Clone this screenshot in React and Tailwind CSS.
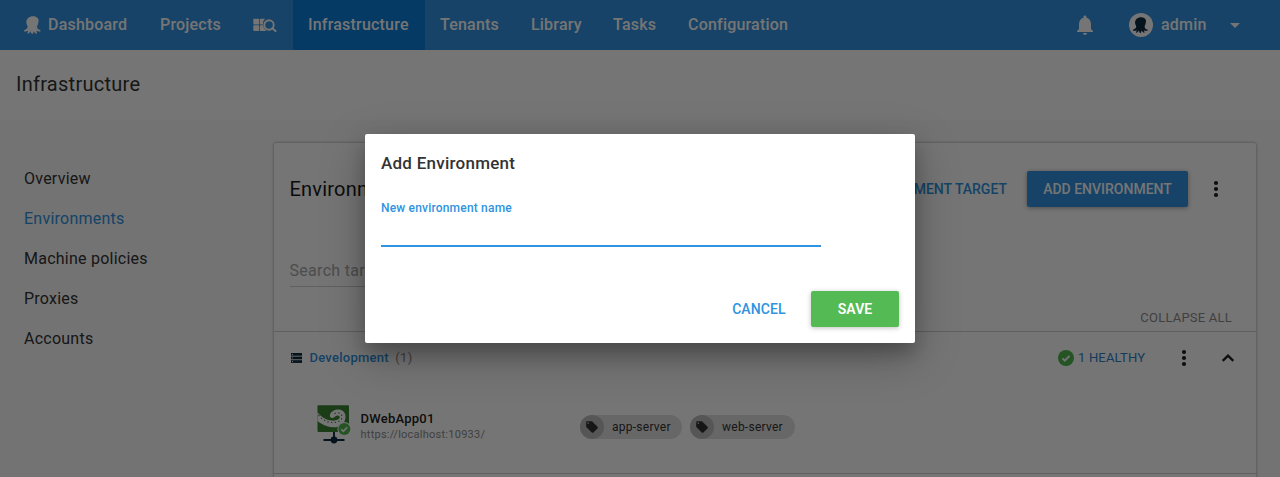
import React from "react";

function Octopus({ className }) {
  return (
    <svg viewBox="0 0 18 18" className={className} fill="currentColor">
      <path d="M9 .2C5.200.2 2.300 2.800 2.300 6.200c0 1.500.6 2.500 1.100 3.600.4 1.100.2 2.200-.7 2.900-.8.700-1.600 1-2.500 1.600-.5.400-.3 1 .3 1.100 1.200.2 2.600 0 3.700-.6-.1.800-.5 1.500-.8 2.200-.2.600.2.900.7.700 1.100-.5 1.900-1.400 2.500-2.400.2.900.4 1.600.9 2.300.3.500 1.100.5 1.400 0 .4-.7.600-1.400.8-2.300.6 1 1.400 1.900 2.500 2.400.6.200 1-.1.800-.7-.3-.8-.6-1.400-.8-2.200 1.100.7 2.600.9 3.900.7.700-.1.800-.7.300-1.100-.9-.6-1.900-.9-2.600-1.600-.8-.8-.9-1.900-.5-3 .4-1.100 1-2.100 1-3.600C15.700 2.800 12.800.2 9 .2z" />
    </svg>
  );
}

function ProjectSearch() {
  return (
    <svg viewBox="0 0 24 14" className="h-[14px] w-[24px]" fill="currentColor">
      <rect x="0.300" y="0.800" width="5.900" height="5.700" rx="0.800" />
      <rect x="0.300" y="7.300" width="5.900" height="5.700" rx="0.800" />
      <path d="M7.600.8h4.600a6.200 6.200 0 0 0-2.200 5.700H6.900V1.600q0-.8.7-.8z" />
      <path d="M6.900 7.300h3.100a6.400 6.400 0 0 0 3.200 5.100l-.4.600H7.600q-.7 0-.7-.8z" />
      <circle cx="16" cy="7" r="4.700" fill="none" stroke="currentColor" strokeWidth="1.900" />
      <path d="M19.300 10.200l3.200 2.900" stroke="currentColor" strokeWidth="2" strokeLinecap="round" />
    </svg>
  );
}

function MoreVert() {
  return (
    <svg viewBox="0 0 24 24" className="h-6 w-6 shrink-0 text-[#1f1f1f]" fill="currentColor">
      <circle cx="12" cy="6" r="2.100" />
      <circle cx="12" cy="12" r="2.100" />
      <circle cx="12" cy="18" r="2.100" />
    </svg>
  );
}

function CheckCircle({ className }) {
  return (
    <svg viewBox="0 0 16 16" className={className}>
      <circle cx="8" cy="8" r="8" fill="#50b84f" />
      <path d="M4.500 8.300l2.300 2.300 4.700-4.700" fill="none" stroke="#fff" strokeWidth="1.900" />
    </svg>
  );
}

function EnvironmentIcon() {
  return (
    <svg viewBox="0 0 11 10" className="h-[10px] w-[11px]">
      <g fill="#0d2a3f">
        <rect width="11" height="2.700" />
        <rect y="3.600" width="11" height="2.700" />
        <rect y="7.200" width="11" height="2.700" />
      </g>
      <g fill="#fff">
        <rect x="1" y="0.900" width="1" height="1" />
        <rect x="1" y="4.500" width="1" height="1" />
        <rect x="1" y="8.100" width="1" height="1" />
      </g>
    </svg>
  );
}

function TentacleIcon() {
  return (
    <svg viewBox="0 0 34 40" className="h-[40px] w-[34px] shrink-0">
      <path d="M17 26v9M6.500 35h21" stroke="#0d2a3f" strokeWidth="1.900" fill="none" />
      <circle cx="17" cy="35" r="3.400" fill="#0d2a3f" />
      <rect x="0.500" y="0.300" width="31.500" height="26.700" rx="1" fill="#3a8536" />
      <path
        d="M.5 7C3.500 11.500 8.500 15 15 15.600c4 .3 7.300-.6 7.700-3 .3-1.900-1.700-2.500-3.500-1.700-1.800.7-2.600 2.300-4.300 2.100-1.900-.3-2.600-2.300-1.600-4.200 1.500-3 5.300-4.700 8.900-4.200 4 .6 6.500 3.600 6.300 7.600-.1 2.300-.9 3.900-1.800 5.400-3.300.8-5.200 2.700-6.200 4.300-3.500.6-7.500.3-11-.9C5.900 19.800 3 18 .5 16z"
        fill="#fff"
      />
      <path d="M1.500 10.200c3.500 4.500 8.500 6.900 13.500 7.300 5.500.4 9.600-1.600 10-5.200.3-2.600-1.600-4.600-4.800-4.400-1.500.1-2.700.6-3.700 1.400" fill="none" stroke="#3a8536" strokeWidth="1.200" strokeDasharray="1.300 2.400" />
      <circle cx="27.300" cy="24" r="6.900" fill="#fff" />
      <circle cx="27.300" cy="24" r="6" fill="#50b84f" />
      <path d="M24.200 24.200l2.100 2.100 4-4.100" fill="none" stroke="#fff" strokeWidth="1.600" />
    </svg>
  );
}

function Chip({ label, className }) {
  return (
    <div className={"flex h-6 items-center rounded-full bg-[#e0e0e0] " + className}>
      <div className="flex h-6 w-6 items-center justify-center rounded-full bg-[#bcbcbc] text-[#303030]">
        <svg viewBox="0 0 24 24" className="h-[14px] w-[14px]" fill="currentColor">
          <path d="M21.410 11.580l-9-9C12.050 2.220 11.550 2 11 2H4c-1.100 0-2 .9-2 2v7c0 .550.220 1.050.590 1.420l9 9c.360.360.860.580 1.410.580s1.050-.220 1.410-.590l7-7c.370-.360.590-.860.590-1.410s-.230-1.060-.590-1.420zM5.500 7C4.670 7 4 6.330 4 5.500S4.670 4 5.500 4 7 4.670 7 5.500 6.330 7 5.500 7z" />
        </svg>
      </div>
      <span className="ml-2 text-[12px] tracking-[0.250px] text-[#333]">{label}</span>
    </div>
  );
}

function NavBar() {
  return (
    <header className="flex h-[50px] items-center bg-[#3192e0] text-[16px] font-medium tracking-[0.200px] text-white">
      <div className="ml-6 flex w-[104px] items-center">
        <Octopus className="mr-[6px] h-[18px] w-[18px] shrink-0" />
        Dashboard
      </div>
      <div className="ml-8 w-[60px]">Projects</div>
      <div className="ml-[33px] w-6">
        <ProjectSearch />
      </div>
      <div className="ml-4 flex h-[50px] w-[132px] items-center bg-[#0a7ed8] pl-[15px]">Infrastructure</div>
      <div className="ml-[15px] w-[91px]">Tenants</div>
      <div className="w-[82px]">Library</div>
      <div className="w-[75px]">Tasks</div>
      <div className="w-[100px]">Configuration</div>
      <svg viewBox="0 0 16 20" className="ml-[289px] h-[20px] w-[16px]" fill="currentColor">
        <path d="M8 20c1.100 0 2-.9 2-2H6c0 1.100.9 2 2 2zm6-6V9c0-3.070-1.640-5.640-4.500-6.320V2C9.500 1.170 8.830.5 8 .5S6.500 1.170 6.500 2v.68C3.630 3.360 2 5.920 2 9v5l-2 2v1h16v-1l-2-2z" />
      </svg>
      <div className="ml-9 flex h-6 w-6 items-center justify-center rounded-full bg-white text-[#0d2a3f]">
        <Octopus className="h-4 w-4" />
      </div>
      <div className="ml-2 w-[45px]">admin</div>
      <svg viewBox="0 0 10 5" className="ml-6 h-[5px] w-[10px]" fill="currentColor">
        <path d="M0 0h10L5 5z" />
      </svg>
    </header>
  );
}

function EnvironmentsCard() {
  return (
    <section className="ml-[274px] mt-[23px] h-[400px] w-[982px] rounded-[2px] bg-white shadow-[0_0_3px_rgba(0,0,0,0.400)]">
      <div className="flex h-[92px] items-center pl-[15.500px] pr-7">
        <h2 className="text-[20px] tracking-[0.200px] text-[#1a1a1a]">Environments</h2>
        <span className="ml-auto text-[14px] font-medium text-[#2f93e0]">ADD DEPLOYMENT TARGET</span>
        <button className="ml-5 h-9 w-[161px] rounded-[2px] bg-[#3192e0] text-[14px] font-medium text-white shadow-[0_1px_5px_rgba(0,0,0,0.350)]">
          ADD ENVIRONMENT
        </button>
        <div className="ml-4">
          <MoreVert />
        </div>
      </div>
      <div className="flex h-[96px] flex-col">
        <div className="ml-4 mt-[22px] h-[30px] w-[440px] border-b border-[#d0d0d0] pt-[1px] text-[16px] leading-[26px] tracking-[0.300px] text-[#a8a8a8]">
          <span className="-ml-[0.500px]">Search targets...</span>
        </div>
        <div className="ml-auto mr-6 mt-[21px] h-5 text-[13px] leading-[20px] tracking-[0.220px] text-[#8c8c8c]">COLLAPSE ALL</div>
      </div>
      <div className="flex h-[143px] flex-col border-y border-[#cfcfcf]">
        <div className="flex h-[52px] items-center pl-[17px] pr-4">
          <EnvironmentIcon />
          <span className="ml-[7.500px] text-[13px] font-medium tracking-[0.250px] text-[#2f93e0]">Development</span>
          <span className="ml-[6.500px] text-[13px] tracking-[0.300px] text-[#8c8c8c]">(1)</span>
          <CheckCircle className="ml-auto h-4 w-4" />
          <span className="ml-1 w-[68px] text-[13px] tracking-[0.180px] text-[#2f80c8]">1 HEALTHY</span>
          <div className="ml-[26px]">
            <MoreVert />
          </div>
          <svg viewBox="0 0 24 24" className="ml-5 h-6 w-6 text-[#1f1f1f]" fill="none" stroke="currentColor" strokeWidth="2.200">
            <path d="M6.700 14.900L12 9.600l5.300 5.300" />
          </svg>
        </div>
        <div className="flex pl-[43px] pt-[21px]">
          <TentacleIcon />
          <div className="ml-[9.500px] mt-[6px] w-[219.500px]">
            <div className="text-[13px] font-medium leading-[16px] tracking-[0.250px] text-[#222]">DWebApp01</div>
            <div className="text-[11px] leading-[16px] tracking-[0.250px] text-[#8c8c8c]">https://localhost:10933/</div>
          </div>
          <div className="mt-[10px] flex gap-2">
            <Chip label="app-server" className="w-[102px]" />
            <Chip label="web-server" className="w-[105px]" />
          </div>
        </div>
      </div>
    </section>
  );
}

export default function App() {
  const links = ["Overview", "Environments", "Machine policies", "Proxies", "Accounts"];
  return (
    <div className="relative h-[477px] w-[1280px] overflow-hidden bg-[#fafafa] font-['Roboto',sans-serif]">
      <NavBar />
      <div className="flex h-[70px] items-center bg-white pb-[2px] pl-4 text-[20px] tracking-[0.260px] text-[#333]">Infrastructure</div>
      <main className="flex h-[357px] overflow-hidden">
        <nav className="-mr-[200px] w-[200px] pl-6 pt-[39px]">
          {links.map((l) => (
            <div
              key={l}
              className={
                "h-10 text-[16px] leading-[40px] tracking-[0.240px] " + (l === "Environments" ? "text-[#2f93e0]" : "text-[#333]")
              }
            >
              {l}
            </div>
          ))}
        </nav>
        <EnvironmentsCard />
      </main>
      <div className="absolute inset-0 flex items-center justify-center bg-black/54">
        <div className="flex h-[209px] w-[550px] flex-col rounded-[2px] bg-white px-4 shadow-[0_14px_45px_rgba(0,0,0,0.250),0_10px_18px_rgba(0,0,0,0.220)]">
          <div className="mt-[17px] h-6 text-[17px] font-medium leading-[24px] tracking-[0.250px] text-[#333]">Add Environment</div>
          <div className="mt-[25px] h-4 text-[12px] font-medium leading-[16px] tracking-[0.190px] text-[#2f93e0]">New environment name</div>
          <div className="h-[31px] w-[440px] border-b-2 border-[#2f93e0]" />
          <div className="ml-auto mt-[44px] flex h-9 items-center text-[14px] font-medium">
            <span className="mr-[25.500px] tracking-[0.060px] text-[#2f93e0]">CANCEL</span>
            <button className="h-9 w-[88px] rounded-[2px] bg-[#54ba53] font-semibold text-white shadow-[0_1px_5px_rgba(0,0,0,0.250)]">SAVE</button>
          </div>
        </div>
      </div>
    </div>
  );
}
